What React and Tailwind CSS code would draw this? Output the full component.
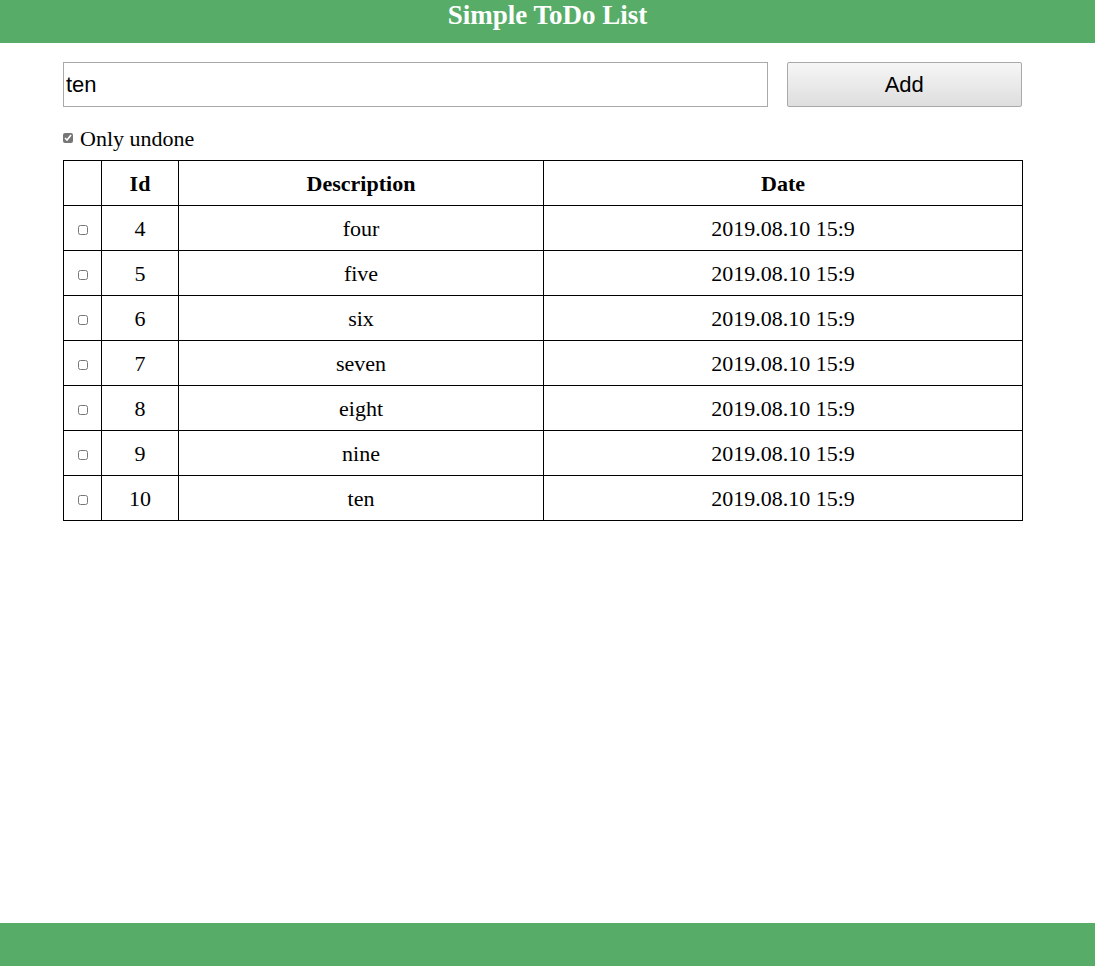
import React, { useState } from "react";

const initialTodos = [
  { id: 4, description: "four", date: "2019.08.10 15:9", done: false },
  { id: 5, description: "five", date: "2019.08.10 15:9", done: false },
  { id: 6, description: "six", date: "2019.08.10 15:9", done: false },
  { id: 7, description: "seven", date: "2019.08.10 15:9", done: false },
  { id: 8, description: "eight", date: "2019.08.10 15:9", done: false },
  { id: 9, description: "nine", date: "2019.08.10 15:9", done: false },
  { id: 10, description: "ten", date: "2019.08.10 15:9", done: false },
];

const App = () => {
  const [text, setText] = useState("ten");
  const [onlyUndone, setOnlyUndone] = useState(true);
  const [todos, setTodos] = useState(initialTodos);

  const toggle = (id) => {
    setTodos(todos.map((t) => (t.id === id ? { ...t, done: !t.done } : t)));
  };

  const visible = onlyUndone ? todos.filter((t) => !t.done) : todos;

  return (
    <div className="min-h-screen flex flex-col bg-white font-['Liberation_Serif',serif] text-black">
      {/* Header */}
      <header className="h-[43px] bg-[#57ad68] text-center">
        <h1 className="text-[27px] leading-[30px] font-bold text-white">Simple ToDo List</h1>
      </header>

      <main className="flex-1 pl-[63px] pr-[73px] pt-[19px]">
        {/* Input row */}
        <div className="flex gap-[19px]">
          <input
            type="text"
            value={text}
            onChange={(e) => setText(e.target.value)}
            className="w-[706px] h-[45px] border border-[#a9a9a9] px-[2px] text-[22px] font-['Liberation_Sans',sans-serif] outline-none"
          />
          <button className="w-[236px] h-[45px] border border-[#a9a9a9] rounded-[2px] bg-gradient-to-b from-[#f6f6f6] to-[#dedede] text-[22px] font-['Liberation_Sans',sans-serif]">
            Add
          </button>
        </div>

        {/* Filter */}
        <label className="flex items-center mt-[20px] h-[22px] text-[22px]">
          <input
            type="checkbox"
            checked={onlyUndone}
            onChange={() => setOnlyUndone(!onlyUndone)}
            className="w-[10px] h-[10px] m-0 mr-[7px] accent-[#767676]"
          />
          Only undone
        </label>

        {/* Table */}
        <table className="mt-[11px] w-[960px] border-collapse text-[22px] text-center">
          <thead>
            <tr className="h-[45px]">
              <th className="w-[38px] border border-black"></th>
              <th className="w-[77px] border border-black font-bold">Id</th>
              <th className="w-[365px] border border-black font-bold">Description</th>
              <th className="border border-black font-bold">Date</th>
            </tr>
          </thead>
          <tbody>
            {visible.map((t) => (
              <tr key={t.id} className="h-[45px]">
                <td className="border border-black">
                  <input
                    type="checkbox"
                    checked={t.done}
                    onChange={() => toggle(t.id)}
                    className="w-[10px] h-[10px] m-0 align-middle"
                  />
                </td>
                <td className="border border-black">{t.id}</td>
                <td className="border border-black">{t.description}</td>
                <td className="border border-black">{t.date}</td>
              </tr>
            ))}
          </tbody>
        </table>
      </main>

      {/* Footer */}
      <footer className="h-[43px] bg-[#57ad68]"></footer>
    </div>
  );
};

export default App;
